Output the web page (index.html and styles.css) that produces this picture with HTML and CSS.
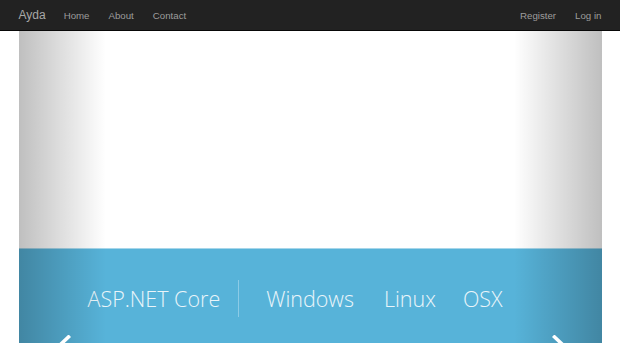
FILE: index.html
```html
<!DOCTYPE html>
<html lang="en">
<head>
  <meta charset="UTF-8" />
  <title>Ayda</title>
  <link rel="stylesheet" href="styles.css">
</head>
<body>

  <nav class="navbar">
    <div class="container nav-inner">
      <a class="brand" href="#">Ayda</a>
      <ul class="nav-links">
        <li><a href="#">Home</a></li>
        <li><a href="#">About</a></li>
        <li><a href="#">Contact</a></li>
      </ul>
      <ul class="nav-links nav-right">
        <li><a href="#">Register</a></li>
        <li><a href="#">Log in</a></li>
      </ul>
    </div>
  </nav>

  <div class="container">
    <div class="carousel">
      <div class="slide">
        <div class="slide-top"></div>
        <div class="slide-band">
          <span class="band-title">ASP.NET Core</span>
          <span class="band-sep"></span>
          <span class="band-os os-win">Windows</span>
          <span class="band-os os-linux">Linux</span>
          <span class="band-os os-osx">OSX</span>
        </div>
      </div>

      <a class="control control-left" href="#">
        <svg class="chevron" width="14" height="20" viewBox="0 0 14 20">
          <polyline points="11.5,2 3,10 11.5,18" fill="none" stroke="#fff" stroke-width="3.6" stroke-linecap="square"/>
        </svg>
      </a>
      <a class="control control-right" href="#">
        <svg class="chevron" width="14" height="20" viewBox="0 0 14 20">
          <polyline points="2.5,2 11,10 2.5,18" fill="none" stroke="#fff" stroke-width="3.6" stroke-linecap="square"/>
        </svg>
      </a>
    </div>
  </div>

</body>
</html>
```

FILE: styles.css
```css
body {
  margin: 0;
  background: #fff;
  font-family: 'Liberation Sans', Arial, sans-serif;
  overflow: hidden;
}
.container {
  width: 583px;
  margin: 0 auto;
}

/* navbar */
.navbar {
  background: #222;
  border-bottom: 1px solid #080808;
  height: 30px;
}
.nav-inner {
  display: flex;
  align-items: center;
  height: 30px;
}
.brand {
  color: #a8a8a8;
  font-size: 12px;
  text-decoration: none;
  margin-right: 8.5px;
}
.nav-links {
  display: flex;
  list-style: none;
  margin: 0;
  padding: 0;
}
.nav-links a {
  display: block;
  color: #9d9d9d;
  font-size: 9.7px;
  text-decoration: none;
  padding: 0 9.5px;
}
.nav-right {
  margin-left: auto;
  margin-right: -9.5px;
}

/* carousel */
.carousel {
  position: relative;
  overflow: hidden;
  height: 420px;
}
.slide-top {
  height: 217px;
  background: #fff;
}
.slide-band {
  display: flex;
  align-items: center;
  height: 98px;
  padding-left: 69px;
  padding-bottom: 100px;
  background: #57b3d9;
  border-top: 1px solid #a6d6ea;
  color: #eaf5fa;
  font-family: 'Open Sans', 'Noto Sans', sans-serif;
  font-weight: 300;
  font-size: 21.5px;
}
.band-sep {
  width: 1px;
  height: 37px;
  background: #8ccbe6;
  margin: 0 27px 0 18px;
}
.os-win { margin-right: 30px; }
.os-linux { margin-right: 27px; }

.control {
  position: absolute;
  top: 0;
  bottom: 0;
  width: 15%;
}
.control-left {
  left: 0;
  background: linear-gradient(to right, rgba(0,0,0,.25), rgba(0,0,0,0));
}
.control-right {
  right: 0;
  background: linear-gradient(to left, rgba(0,0,0,.25), rgba(0,0,0,0));
}
.chevron {
  position: absolute;
  top: 304px;
}
.control-left .chevron { left: 38px; }
.control-right .chevron { right: 36px; }
```
